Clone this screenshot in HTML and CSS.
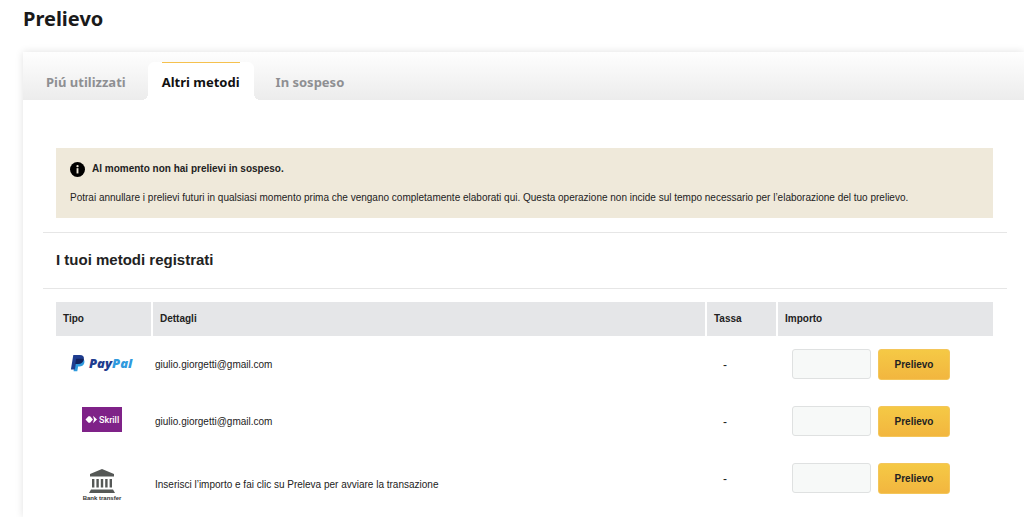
FILE: index.html
```
<!DOCTYPE html>
<html lang="it">
<head>
    <meta charset="UTF-8">
    <meta name="viewport" content="width=device-width, initial-scale=1.0">
    <title>Prelievo</title>
    <link rel="stylesheet" href="styles.css">
</head>
<body>
    <h1>Prelievo</h1>

    <main class="panel">
        <nav class="tabs">
            <a href="#" class="tab">Piú utilizzati</a>
            <a href="#" class="tab active"><span>Altri metodi</span></a>
            <a href="#" class="tab">In sospeso</a>
        </nav>

        <div class="content">
            <div class="notice">
                <p class="notice-title">
                    <svg class="notice-icon" viewBox="0 0 16 16" aria-hidden="true">
                        <circle cx="8" cy="8" r="8" fill="#000"/>
                        <circle cx="8" cy="4.4" r="1.2" fill="#efe9da"/>
                        <path d="M7 6.600h2v5.600h-2z" fill="#efe9da"/>
                    </svg>
                    Al momento non hai prelievi in sospeso.
                </p>
                <p>Potrai annullare i prelievi futuri in qualsiasi momento prima che vengano completamente elaborati qui. Questa operazione non incide sul tempo necessario per l’elaborazione del tuo prelievo.</p>
            </div>

            <h2>I tuoi metodi registrati</h2>

            <table class="methods">
                <thead>
                    <tr>
                        <th class="col-type">Tipo</th>
                        <th>Dettagli</th>
                        <th class="col-fee">Tassa</th>
                        <th class="col-amount">Importo</th>
                    </tr>
                </thead>
                <tbody>
                    <tr>
                        <td class="type">
                            <svg class="logo-paypal" viewBox="0 0 64 18" role="img" aria-label="PayPal">
                                <path d="M5 4.500h7.400c2.200 1 2.300 3 1.800 4.800c-.7 2.300-2.500 3.300-4.900 3.300h-1.200l-.8 4.600h-3.700z" fill="#2f9ade"/>
                                <path d="M3.300 1h6.600c3.200 0 4.500 1.700 3.900 4.400c-.7 3.200-2.900 4.500-5.800 4.500h-2.200l-.9 5.500h-4z" fill="#1f3d8f"/>
                                <path d="M6.100 4.700h7.700c-.4 3.400-2.400 5.200-5.900 5.200h-2.600z" fill="#12235f"/>
                                <text x="19" y="14" class="paypal-text" fill="#1f3d8f">Pay<tspan fill="#2f9ade">Pal</tspan></text>
                            </svg>
                        </td>
                        <td>giulio.giorgetti@gmail.com</td>
                        <td class="fee">-</td>
                        <td>
                            <form class="withdraw">
                                <input type="text" aria-label="Importo PayPal">
                                <button type="button">Prelievo</button>
                            </form>
                        </td>
                    </tr>
                    <tr>
                        <td class="type">
                            <svg class="logo-skrill" viewBox="0 0 40 25" role="img" aria-label="Skrill">
                                <rect width="40" height="25" fill="#7f2288"/>
                                <path d="M3.500 12.500l3-3.200h1.600l2.800 3.200l-2.800 3.200H6.500z M11 8.800l4 3.700l-4 3.700l1-3.700z" fill="#fff"/>
                                <text x="17" y="16" class="skrill-text" fill="#fff">Skrill</text>
                            </svg>
                        </td>
                        <td>giulio.giorgetti@gmail.com</td>
                        <td class="fee">-</td>
                        <td>
                            <form class="withdraw">
                                <input type="text" aria-label="Importo Skrill">
                                <button type="button">Prelievo</button>
                            </form>
                        </td>
                    </tr>
                    <tr class="bank">
                        <td class="type">
                            <svg class="logo-bank" viewBox="0 0 40 34" role="img" aria-label="Bank transfer">
                                <path d="M20 1l12 5v2.500H8V6z M10 11h2.400v8.500H10z M14.400 11h2.400v8.500h-2.400z M18.800 11h2.400v8.500h-2.400z M23.200 11h2.400v8.500h-2.400z M27.600 11H30v8.500h-2.400z M9 21.500h22l2 3.500H7z" fill="#555856"/>
                                <text x="20" y="32" class="bank-text" text-anchor="middle" fill="#333">Bank transfer</text>
                            </svg>
                        </td>
                        <td class="details">Inserisci l’importo e fai clic su Preleva per avviare la transazione</td>
                        <td class="fee">-</td>
                        <td>
                            <form class="withdraw">
                                <input type="text" aria-label="Importo bonifico">
                                <button type="button">Prelievo</button>
                            </form>
                        </td>
                    </tr>
                </tbody>
            </table>
        </div>
    </main>
</body>
</html>
```

FILE: styles.css
```
* {
    margin: 0;
    padding: 0;
    box-sizing: border-box;
}

body {
    font-family: "Liberation Sans", Arial, sans-serif;
    font-size: 10px;
    line-height: 14px;
    color: #222;
    background: #fff;
    padding: 6px 0 0 23px;
    overflow-x: hidden;
}

h1 {
    font-family: "Noto Sans", sans-serif;
    font-size: 20px;
    line-height: 26px;
    font-weight: 700;
    color: #1a1a1a;
    margin-bottom: 20px;
}

.panel {
    background: #fff;
    box-shadow: 0 0 8px rgba(0, 0, 0, 0.12);
}

/* tabs */
.tabs {
    display: flex;
    height: 48px;
    padding: 10px 0 0 1px;
    background: linear-gradient(#fefefe, #ececec);
}

.tab {
    font-family: "Noto Sans", sans-serif;
    font-size: 13px;
    line-height: 18px;
    font-weight: 700;
    color: #8e8f92;
    text-decoration: none;
    padding: 11px 22px 0;
}

.tab.active {
    position: relative;
    color: #111;
    background: #fff;
    border-radius: 6px 6px 0 0;
    padding: 0 14px;
}

.tab.active span {
    display: block;
    padding-top: 10px;
    border-top: 1px solid #f5c14e;
}

.tab.active::before,
.tab.active::after {
    content: '';
    position: absolute;
    bottom: 0;
    width: 6px;
    height: 6px;
}

.tab.active::before {
    right: 100%;
    background: radial-gradient(circle at top left, transparent 6px, #fff 6px);
}

.tab.active::after {
    left: 100%;
    background: radial-gradient(circle at top right, transparent 6px, #fff 6px);
}

/* content */
.content {
    padding: 48px 17px 10px 20px;
}

.notice {
    margin: 0 14px 14px 13px;
    padding: 13px 14px;
    background: #efe9da;
}

.notice-title {
    display: flex;
    align-items: center;
    gap: 7px;
    font-weight: 700;
    line-height: 16px;
    margin-bottom: 14px;
}

.notice-icon {
    width: 15px;
    height: 15px;
}

h2 {
    font-size: 15px;
    line-height: 20px;
    font-weight: 700;
    padding: 17px 13px 18px;
    margin-bottom: 13px;
    border-top: 1px solid #e6e6e6;
    border-bottom: 1px solid #e6e6e6;
}

/* methods table */
.methods {
    width: calc(100% - 27px);
    margin: 0 14px 0 13px;
    table-layout: fixed;
    border-collapse: separate;
    border-spacing: 0;
}

th {
    height: 34px;
    padding: 0 7px;
    text-align: left;
    background: #e5e6e8;
    border-right: 2px solid #fff;
}

th:last-child {
    border-right: none;
}

.col-type {
    width: 97px;
}

.col-fee {
    width: 71px;
}

.col-amount {
    width: 215px;
}

td {
    height: 57px;
    padding: 0 2px;
    vertical-align: middle;
}

td.type {
    padding: 0 6px 4px 0;
}

.type svg {
    display: block;
    margin: 0 auto;
}

td.fee {
    padding-left: 16px;
    font-size: 12px;
}

.bank td.type,
.bank .details {
    padding-top: 12px;
    padding-bottom: 0;
}

.logo-paypal {
    width: 64px;
    height: 18px;
}

.paypal-text {
    font: italic 800 13px "Open Sans", sans-serif;
}

.logo-skrill {
    width: 40px;
    height: 25px;
}

.skrill-text {
    font: 500 9px Roboto, sans-serif;
}

.logo-bank {
    width: 40px;
    height: 34px;
}

.bank-text {
    font: 700 6px "Liberation Sans", sans-serif;
}

.withdraw {
    display: flex;
    gap: 7px;
    padding-left: 12px;
}

.withdraw input {
    width: 79px;
    height: 30px;
    padding: 0 6px;
    border: 1px solid #dfe1e1;
    border-radius: 3px;
    background: #f7f9f8;
    font: inherit;
}

.withdraw button {
    width: 72px;
    height: 31px;
    border: 1px solid #f4c65a;
    border-radius: 3px;
    background: linear-gradient(#f5c945, #f2b63f);
    color: #222;
    font: inherit;
    font-weight: 700;
    cursor: pointer;
}
```
